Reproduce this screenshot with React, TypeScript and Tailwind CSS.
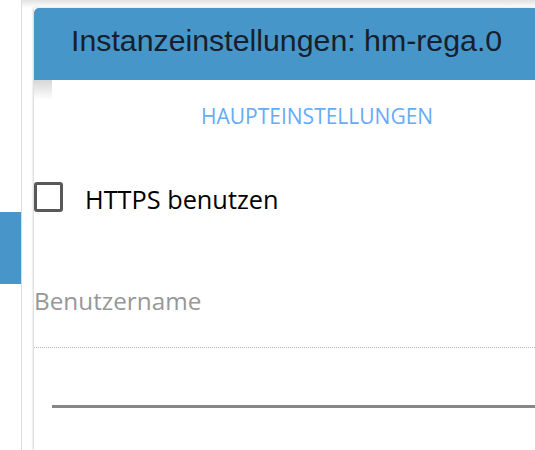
export default function App() {
  return (
    <div className="flex h-[450px] w-[535px] overflow-hidden bg-white">
      {/* Seitenleiste */}
      <aside className="w-[22px] shrink-0 border-r border-[#dcdcdc]">
        <div className="mt-[212px] h-[72px] w-[21px] bg-[#4896c9]" />
      </aside>

      <main className="min-w-0 flex-1 bg-[linear-gradient(to_bottom,#e2e2e2,#ffffff_8px)] pt-[8px] pl-[12px]">
        <div className="relative h-full bg-white shadow-[-1px_0_2px_rgba(0,0,0,0.18)]">
          <div className="flex h-[72px] items-center rounded-tl-[5px] bg-[#4796c9] pb-[6px] pl-[37px]">
            <h1 className="whitespace-nowrap font-['Liberation_Sans',Arial,sans-serif] text-[30.3px] leading-none text-[#17202a]">
              Instanzeinstellungen: hm-rega.0
            </h1>
          </div>
          <div className="absolute left-0 top-[72px] h-[20px] w-[18px] bg-[linear-gradient(to_bottom,#d6d6d6,#ffffff)]" />

          <div className="flex h-[72px] items-center pl-[167px]">
            <span className="font-['Open_Sans',sans-serif] text-[21px] leading-none text-[#66abf6]">
              HAUPTEINSTELLUNGEN
            </span>
          </div>

          <label className="mt-[30px] flex h-[30px] items-center font-['Open_Sans',sans-serif]">
            <span className="h-[30px] w-[29px] shrink-0 rounded-[3px] border-[3px] border-[#585858]" />
            <span className="ml-[22px] translate-y-[3px] text-[25.3px] leading-none text-black">HTTPS benutzen</span>
          </label>

          <div className="mt-[77px] font-['Open_Sans',sans-serif] text-[24.3px] leading-none text-[#979797]">
            Benutzername
          </div>
          <div className="mt-[34px] border-t border-dotted border-[#b5b5b5]" />
          <div className="ml-[18px] mt-[57px] h-[3px] bg-[#878787]" />
        </div>
      </main>
    </div>
  );
}
